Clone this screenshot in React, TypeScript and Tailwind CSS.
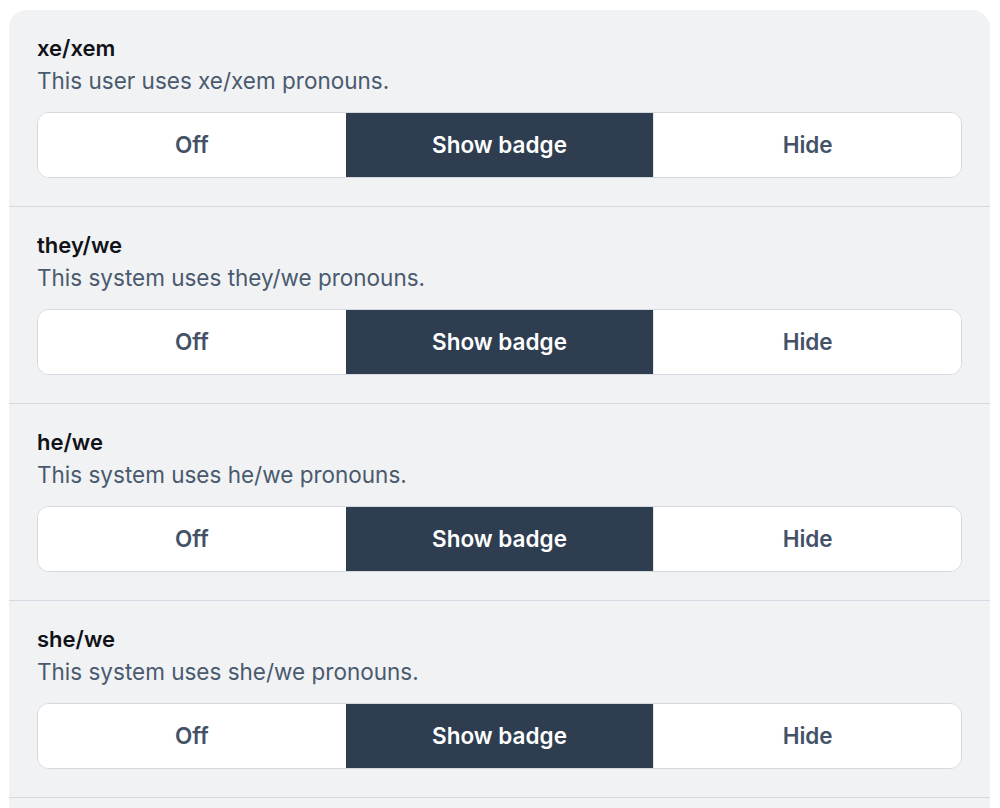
const ROWS = [
  { label: 'xe/xem', text: 'This user uses xe/xem pronouns.' },
  { label: 'they/we', text: 'This system uses they/we pronouns.' },
  { label: 'he/we', text: 'This system uses he/we pronouns.' },
  { label: 'she/we', text: 'This system uses she/we pronouns.' },
]

const OPTIONS = ['Off', 'Show badge', 'Hide']

function Segmented({ value }: { value: string }) {
  return (
    <div className="mt-4 grid h-[66px] grid-cols-3 overflow-hidden rounded-[12px] border border-[#d3d8df] bg-white">
      {OPTIONS.map((opt, i) => (
        <button
          key={opt}
          className={
            opt === value
              ? 'flex items-center justify-center bg-[#2e3d50] text-[22.5px] font-semibold text-white'
              : 'flex items-center justify-center bg-white text-[22.5px] font-semibold text-[#435266]' +
                (i > 0 ? ' border-l border-[#e3e7ec]' : '')
          }
        >
          {opt}
        </button>
      ))}
    </div>
  )
}

export default function App() {
  return (
    <div className="min-h-screen bg-white pt-[10px] pl-[9px]" style={{ fontFamily: 'Inter, "Noto Sans", sans-serif' }}>
      <div className="w-[981px] rounded-t-[18px] bg-[#f1f2f4] pb-5">
        {ROWS.map((row) => (
          <div key={row.label} className="border-b-[1.5px] border-[#d3dae4] px-7 pt-6 pb-[28px]">
            <div className="text-[22px] leading-[28px] font-semibold text-[#111318]">{row.label}</div>
            <div className="mt-1 text-[22.5px] leading-[30px] text-[#4a5a6e]">{row.text}</div>
            <Segmented value="Show badge" />
          </div>
        ))}
      </div>
    </div>
  )
}
